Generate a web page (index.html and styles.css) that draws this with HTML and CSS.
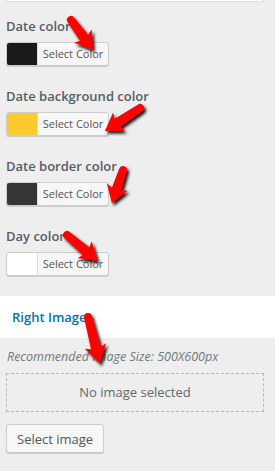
FILE: index.html
```html
<!DOCTYPE html>
<html lang="en">
  <head>
    <meta charset="UTF-8" />
    <title>Customizer</title>
    <link rel="stylesheet" href="styles.css">
  </head>
  <body>
    <div class="panel">
      <div class="top-box"></div>

      <div class="field">
        <span class="field-label">Date color</span>
        <button class="color-btn"><span class="swatch swatch-black"></span><span class="btn-text">Select Color</span></button>
      </div>

      <div class="field">
        <span class="field-label">Date background color</span>
        <button class="color-btn"><span class="swatch swatch-yellow"></span><span class="btn-text">Select Color</span></button>
      </div>

      <div class="field">
        <span class="field-label">Date border color</span>
        <button class="color-btn"><span class="swatch swatch-dark"></span><span class="btn-text">Select Color</span></button>
      </div>

      <div class="field">
        <span class="field-label">Day color</span>
        <button class="color-btn"><span class="swatch swatch-white"></span><span class="btn-text">Select Color</span></button>
      </div>
    </div>

    <div class="section-title">Right Image</div>

    <div class="panel image-panel">
      <p class="hint">Recommended Image Size: 500X600px</p>
      <div class="placeholder">No image selected</div>
      <button class="wp-btn">Select image</button>
    </div>

    <!-- red annotation arrows drawn over the screenshot -->
    <svg class="arrows" width="275" height="471" viewBox="0 0 275 471">
      <defs>
        <filter id="shadow" x="-30%" y="-30%" width="160%" height="160%">
          <feDropShadow dx="2" dy="2.5" stdDeviation="1.5" flood-color="#000" flood-opacity="0.95" />
        </filter>
      </defs>
      <g fill="#f00" filter="url(#shadow)">
        <path transform="translate(71 20) rotate(53.7)" d="M0,-4 L22,-5 L20,-11 L37,0 L20,11 L22,5 L0,4 A4,4 0 0 1 0,-4 Z" />
        <path transform="translate(140 108) rotate(146.7)" d="M0,-4 L27,-5 L25,-11 L42,0 L25,11 L27,5 L0,4 A4,4 0 0 1 0,-4 Z" />
        <path transform="translate(123 170) rotate(108.4)" d="M0,-4 L20,-5 L18,-11 L35,0 L18,11 L20,5 L0,4 A4,4 0 0 1 0,-4 Z" />
        <path transform="translate(67 235) rotate(40)" d="M0,-4 L25,-5 L23,-11 L40,0 L23,11 L25,5 L0,4 A4,4 0 0 1 0,-4 Z" />
        <path transform="translate(88 317) rotate(75.7)" d="M0,-4 L32,-5 L30,-11 L48,0 L30,11 L32,5 L0,4 A4,4 0 0 1 0,-4 Z" />
      </g>
    </svg>
  </body>
</html>
```

FILE: styles.css
```css
body {
  margin: 0;
  padding: 0;
  background: #eeeeee;
  font-family: "Open Sans", "Noto Sans", sans-serif;
  color: #555d66;
  position: relative;
  height: 471px;
  overflow: hidden;
}

.panel {
  padding: 0 11px 0 6px;
}

.top-box {
  height: 1px;
  background: #ffffff;
  border: 1px solid #dddddd;
  border-top: none;
  margin-bottom: 14px;
}

.field {
  margin-bottom: 20px;
}

.field-label {
  display: block;
  font-size: 13px;
  font-weight: 600;
  line-height: 20px;
  margin-bottom: 6px;
  white-space: nowrap;
}

.color-btn {
  display: flex;
  align-items: stretch;
  height: 24px;
  width: 103px;
  padding: 0;
  border: 1px solid #cccccc;
  border-radius: 3px;
  background: #f7f7f7;
  box-shadow: 0 1px 0 #cccccc;
  overflow: hidden;
  font-family: inherit;
}

.swatch {
  width: 30px;
  flex: none;
}

.swatch-black { background: #1a1a1a; }
.swatch-yellow { background: #fdca2e; }
.swatch-dark { background: #363636; }
.swatch-white { background: #ffffff; }

.btn-text {
  flex: 1;
  border-left: 1px solid #dddddd;
  font-size: 11px;
  line-height: 22px;
  color: #555555;
  text-align: center;
}

.section-title {
  margin-top: 19px;
  height: 42px;
  line-height: 42px;
  background: #ffffff;
  padding-left: 12px;
  font-size: 13px;
  font-weight: 600;
  color: #0073aa;
}

.hint {
  margin: 11px 0 8px 1px;
  font-size: 12.5px;
  font-style: italic;
  color: #72777c;
  line-height: 16px;
}

.placeholder {
  height: 37px;
  line-height: 37px;
  border: 1px dashed #b4b9be;
  text-align: center;
  font-size: 13px;
  color: #666666;
}

.wp-btn {
  margin-top: 12px;
  height: 29px;
  padding: 0 10px;
  border: 1px solid #cccccc;
  border-radius: 3px;
  background: #f7f7f7;
  box-shadow: 0 1px 0 #cccccc;
  font-family: inherit;
  font-size: 13px;
  color: #555555;
}

.arrows {
  position: absolute;
  left: 0;
  top: 0;
}
```
